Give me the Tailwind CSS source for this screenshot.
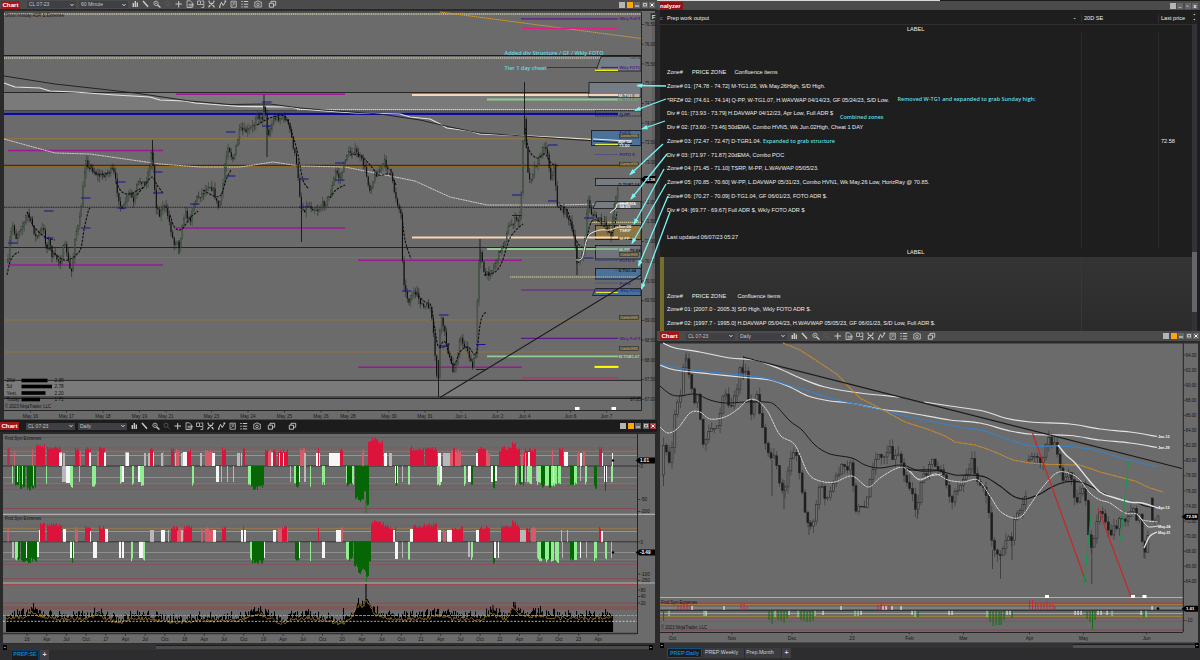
<!DOCTYPE html>
<html lang="en">
<head>
  <meta charset="utf-8">
  <title>PREP</title>
  <script src="https://cdn.jsdelivr.net/npm/@tailwindcss/browser@4"></script>
</head>
<body class="w-[1200px] h-[660px] overflow-hidden bg-[#2d2d30] font-['Liberation_Sans',sans-serif]">

<!-- toolbar shared by the three chart windows -->
<template id="toolbar">
  <div class="w-[19px] h-[8px] shrink-0 bg-[#a3141b] text-white text-[6.2px] leading-[8px] font-bold text-center overflow-hidden">Chart</div>
  <div class="ml-[7px] w-[49px] h-[7px] px-0.5 flex items-center justify-between bg-[#3f3f46] text-[#c4c4c4] text-[5px] leading-none">
    CL 07-23
    <svg class="w-1 h-1" viewBox="0 0 4 4"><path d="M.4 1 2 2.8 3.6 1" fill="none" stroke="#ddd" stroke-width=".9"/></svg>
  </div>
  <div class="ml-[3px] w-[49px] h-[7px] px-0.5 flex items-center justify-between bg-[#3f3f46] text-[#c4c4c4] text-[5px] leading-none">
    <span class="period"></span>
    <svg class="w-1 h-1" viewBox="0 0 4 4"><path d="M.4 1 2 2.8 3.6 1" fill="none" stroke="#ddd" stroke-width=".9"/></svg>
  </div>
  <svg class="ml-[3px] w-[168px] h-[9px] shrink-0" viewBox="131 0 168 9" fill="none" stroke="#c8c8c8" stroke-width=".8">
    <path d="M133.300 3v4M135.300 1v6M137.300 2.500v4.500" stroke-width="1.400"/>
    <path d="M143 1l5 5.800" stroke-width="1.500"/>
    <circle cx="156" cy="3.300" r="2.200"/><path d="M157.500 4.900l3 2.700" stroke-width="1.400"/><path d="M155 3.300h2"/>
    <g stroke="#5c5c5c"><circle cx="167" cy="3.300" r="2.100"/><path d="M168.400 4.800l2.500 2.500"/></g>
    <path d="M175.500 4h6.500M178.700 1v6.500" stroke-width="1"/>
    <path d="M187 .8h3.300l2 2v4.700h-5.300zM188.500 4.300h5.500M188.500 5.900h5"/>
    <path d="M197.500 1h3v3.500h-3zM201.500 1h2.300v6.500h-2.300M201 4.500h2.300"/>
    <path d="M208.300 1.300h1.700M213 1.300h1.700M208.500 7.300l3-4 3 4M209 2.500l5 3.300M214 2.500l-5 3.300" stroke-width="1.100"/>
    <path d="M219.500 6.700l2-4.400 1.700 3.200 2.500-4.200" stroke-width="1"/><path d="M219 7h1.500M224.500 1.300h1.700" stroke-width="1.400"/>
    <path d="M231 1.200h5.300v6h-5.300zM232.300 2.900h3M232.200 5.700l2-2 1 1"/>
    <path d="M241.300 1.500h1.400M243.800 1.500h4.400M241.300 4.200h1.400M243.800 4.200h4.400M241.300 6.900h1.400M243.800 6.900h4.400" stroke-width="1"/>
    <path d="M254.800 2h1.500l.5-.9h2.400l.5.900h1.600v5h-6.500z"/><circle cx="258" cy="4.400" r="1.300"/>
    <path d="M269.300 3.200h4.200v4h-4.200zM271 3v-1.700h4.700v3.900h-1.700" stroke-width=".9"/>
    <g class="extra"><path d="M290.300 3.200h4.200v4h-4.200zM292 3v-1.700h4.700v3.900h-1.700" stroke-width=".9"/></g>
  </svg>
  <div class="ml-auto flex gap-[1.500px]">
    <span class="w-[6px] h-[6px] bg-[#b9b4b4]"></span>
    <span class="w-[6px] h-[6px] bg-[#ffa510]"></span>
    <svg class="w-[6px] h-[6px]" viewBox="0 0 6 6"><path d="M0 0h6v6H0z" fill="#656565"/><path d="M1 4h4" stroke="#eee"/></svg>
    <svg class="w-[6px] h-[6px]" viewBox="0 0 6 6"><path d="M0 0h6v6H0z" fill="#656565"/><path d="M1.500 1.500h3v2.500h-3z" fill="none" stroke="#eee" stroke-width=".7"/></svg>
    <svg class="w-[6px] h-[6px]" viewBox="0 0 6 6"><path class="close" d="M0 0h6v6H0z" fill="#656565"/><path d="M1.500 1.500l3 3M4.500 1.500l-3 3" stroke="#fff"/></svg>
  </div>
</template>

<div class="relative flex w-[1200px] h-[660px]">

  <!-- left column -->
  <div class="w-[657px] flex flex-col">
    <div class="toolbar h-[9px] pl-[1px] pr-[2px] flex items-center bg-[#4b4b4b]" data-period="60 Minute"></div>
    <svg id="hourly" class="block w-[657px] h-[411px]" viewBox="0 9 657 411"></svg>
    <div class="toolbar h-[12px] pr-[1px] flex items-center bg-[#1c1c1c]" data-period="Daily" data-extra="1"></div>
    <svg id="sym" class="block w-[657px] h-[211px]" viewBox="0 432 657 211"></svg>
    <div class="h-[6px] ml-[3px] mr-[4px] mt-px flex items-center justify-between bg-[#333333]">
      <span class="w-[4px] h-[5px] bg-black text-white text-[4px] leading-[5px] text-center">▪</span>
      <span class="ml-[149px] grow h-[4px] bg-[#4b4b4b] border-t border-[#1d1d1d]"></span>
      <span class="w-[4px] h-[5px] bg-black text-white text-[4px] leading-[5px] text-center">▪</span>
    </div>
    <div class="h-[10px] pl-[11px] flex text-[7px] leading-[9px] font-bold">
      <span class="w-[28px] bg-[#1c1c1e] border border-[#123a5c] border-b-0 text-[#0d82d0] text-center text-[5.300px] leading-[7px]">PREP:SE</span>
      <span class="ml-px w-[9px] bg-[#3f3f46] text-[#ddd] text-center">+</span>
    </div>
  </div>

  <!-- right column -->
  <div class="w-[543px] flex flex-col">
    <div class="h-[1px] bg-[#1b1b1b]"><div class="w-[283px] h-px bg-[#d8d8d8]"></div></div>
    <div class="h-[9px] pl-[3px] pr-[2px] flex items-center bg-[#4b4b4b]">
      <span class="w-[23px] h-[8px] bg-[#8e1319] text-white text-[6px] leading-[8px] font-bold">nalyzer</span>
      <span class="ml-auto flex gap-[1.500px]">
        <span class="w-[6px] h-[6px] bg-[#b9b4b4]"></span>
        <span class="w-[6px] h-[6px] bg-[#656565] text-white text-[5px] leading-[5px] text-center">_</span>
        <span class="w-[6px] h-[6px] bg-[#656565] text-white text-[5px] leading-[6px] text-center">▫</span>
        <span class="w-[6px] h-[6px] bg-[#656565] text-white text-[5px] leading-[6px] text-center font-bold">x</span>
      </span>
    </div>
    <div class="h-[321px] ml-[3px] flex bg-[#1e1e1e] text-[#ececec] text-[5.580px]">
      <div class="w-[532px] flex flex-col">
        <div class="h-[15px] pt-[3px] flex items-center border-b border-[#303030]">
          <span class="w-[7px] text-[#888]">c</span>
          <span>Prep work output</span>
          <span class="ml-auto w-[7px] text-[4px]">▪</span>
          <span class="w-[77px] pl-[2px] border-l border-[#303030]">20D SE</span>
          <span class="w-[34px] pl-[2px] border-l border-[#303030] whitespace-nowrap">Last price</span>
        </div>
        <div class="h-[8px] pl-[247px] leading-[8px]">LABEL</div>
        <div class="h-[215px] flex">
          <div class="w-[421px] pl-[7px] pt-[33px] leading-[13.780px] whitespace-pre"><div>Zone#     <span class="pl-[1.500px]">PRICE ZONE</span>     <span class="pl-[.5px]">Confluence items</span></div><div>Zone# 01: [74.78 - 74.72] M-TG1.05, Wk May.26High, S/D High.</div><div>*RFZ# 02: [74.61 - 74.14] Q-PP, W-TG1.07, H.WAVWAP 04/14/23, GF 05/24/23, S/D Low.</div><div>Div # 01: [73.93 - 73.79] H.DAVWAP 04/12/23, Apr Low, Full ADR $</div><div>Div # 02: [73.60 - 73.46] 50dEMA, Combo HVN5, Wk Jun.02High, Cheat 1 DAY</div><div>Zone# 03: [72.47 - 72.47] D-TGR1.04.</div><div>Div # 03: [71.97 - 71.87] 20dEMA, Combo POC</div><div>Zone# 04: [71.45 - 71.10] TSRP, M-PP, L.WAVWAP 05/05/23.</div><div>Zone# 05: [70.85 - 70.60] W-PP, L.DAVWAP 05/31/23, Combo HVN1, Wk May.26 Low, HorizRay @ 70.85.</div><div>Zone# 06: [70.27 - 70.09] D-TG1.04, GF 06/01/23, FOTO ADR $.</div><div>Div # 04: [69.77 - 69.67] Full ADR $, Wkly FOTO ADR $</div><div> </div><div>Last updated 06/07/23 05:27</div></div>
          <div class="w-[77px] border-l border-[#2c2c2c]"></div>
          <div class="w-[34px] pl-[2px] pt-[104px] border-l border-[#2c2c2c] leading-[8px]">72.58</div>
        </div>
        <div class="h-[9px] pl-[247px] leading-[9px]">LABEL</div>
        <div class="grow flex bg-linear-to-b from-[#343434] to-[#2b2b2b]">
          <div class="w-[4px] bg-[#74702c]"></div>
          <div class="w-[417px] pl-[3px] pt-[32.500px] leading-[13.780px] whitespace-pre"><div>Zone#     <span class="pl-[1.500px]">PRICE ZONE</span>      <span class="pl-[2px]">Confluence items</span></div><div>Zone# 01: [2007.0 - 2005.3] S/D High, Wkly FOTO ADR $.</div><div>Zone# 02: [1997.7 - 1995.0] H.DAVWAP 05/04/23, H.WAVWAP 05/05/23, GF 06/01/23, S/D Low, Full ADR $.</div></div>
          <div class="w-[77px] border-l border-[#383838]"></div>
        </div>
      </div>
      <div class="w-[5px] mt-[2px] flex flex-col bg-[#333337]">
        <span class="h-[12px] bg-[#222] text-white text-[4px] leading-[5px] text-center">▪<br>▪</span>
        <span class="mt-[228px] h-[60px] bg-[#66666a]"></span>
      </div>
    </div>
    <div class="toolbar h-[10px] pl-[3px] pr-[1px] flex items-center bg-[#4b4b4b]" data-period="Daily"></div>
    <svg id="daily" class="block w-[543px] h-[302px]" viewBox="657 341 543 302"></svg>
    <div class="h-[5px] ml-[3px] mr-px flex items-center bg-[#333333]">
      <span class="w-[4px] h-[5px] bg-black text-white text-[4px] leading-[5px] text-center">▪</span>
      <span class="ml-auto w-[122px] h-[4px] bg-[#505050] border-t border-[#1d1d1d]"></span>
      <span class="w-[4px] h-[5px] bg-black text-white text-[4px] leading-[5px] text-center">▪</span>
    </div>
    <div class="h-[12px] pl-[10px] flex gap-px text-[5.300px] leading-[9px] text-center text-[#d0d0d0]">
      <span class="w-[35px] h-[10px] bg-[#1c1c1e] border border-[#14507f] text-[#0d82d0] font-bold leading-[8px]">PREP:Daily</span>
      <span class="w-[41px] h-[10px] bg-[#3b3b40] pr-[4px]">PREP:Weekly</span>
      <span class="w-[36px] h-[10px] bg-[#3b3b40] pr-[6px]">Prep.Month</span>
      <span class="w-[9px] h-[10px] bg-[#3f3f46] text-[7px] font-bold">+</span>
    </div>
  </div>

  <!-- annotations drawn over both windows -->
  <svg class="absolute inset-0 w-[1200px] h-[660px] pointer-events-none" viewBox="0 0 1200 660" fill="#62dfe0" font-family="'Open Sans', sans-serif" font-weight="600" font-size="5.400">
    <defs><marker id="tip" markerWidth="7" markerHeight="5" refX="5.500" refY="2.300" orient="auto" markerUnits="userSpaceOnUse"><path d="M0 0 6.500 2.300 0 4.600z" fill="#78f5f5"/></marker></defs>
    <g stroke="#78f5f5" stroke-width="1.300">
      <path d="M666 86L637 85.500" marker-end="url(#tip)"/>
      <path d="M666 99L635 110.500" marker-end="url(#tip)"/>
      <path d="M665 121L642 129" marker-end="url(#tip)"/>
      <path d="M663 144L630 174.500" marker-end="url(#tip)"/>
      <path d="M667 154L631 199" marker-end="url(#tip)"/>
      <path d="M664 169L634 224" marker-end="url(#tip)"/>
      <path d="M666 184L632 243.500" marker-end="url(#tip)"/>
      <path d="M668 196L638.500 266" marker-end="url(#tip)"/>
      <path d="M670 212L641.500 289" marker-end="url(#tip)"/>
    </g>
    <text x="504.500" y="55.300" textLength="99" lengthAdjust="spacingAndGlyphs">Added div Structure / GF / Wkly FOTO</text>
    <text x="504.500" y="70" textLength="42" lengthAdjust="spacingAndGlyphs">Tier 1 day cheat</text>
    <text x="897.500" y="101" textLength="138" lengthAdjust="spacingAndGlyphs">Removed W-TG1 and expanded to grab Sunday high:</text>
    <text x="840" y="118.500" textLength="43.500" lengthAdjust="spacingAndGlyphs">Combined zones</text>
    <text x="763" y="142.600" textLength="72" lengthAdjust="spacingAndGlyphs">Expanded to grab structure</text>
  </svg>
</div>

<script>
// toolbars
document.querySelectorAll('.toolbar').forEach(bar => {
  bar.append(document.getElementById('toolbar').content.cloneNode(true));
  bar.querySelector('.period').textContent = bar.dataset.period;
  if (bar.dataset.extra) bar.querySelector('.close').setAttribute('fill', '#b03038');
  else bar.querySelector('.extra').remove();
});

let seed = 7;
const rnd = () => (seed = (seed * 16807) % 2147483647) / 2147483647;
const nums = s => s.trim().split(/\s+/).map(p => p.split(',').map(Number));
const line = (x1, y1, x2, y2, c, w = 1, dash = '') =>
  `<line x1="${x1}" y1="${y1}" x2="${x2}" y2="${y2}" stroke="${c}" stroke-width="${w}"${dash && ` stroke-dasharray="${dash}"`}/>`;
const poly = (pts, c, w = 1, dash = '') =>
  `<polyline points="${pts}" fill="none" stroke="${c}" stroke-width="${w}" stroke-linejoin="round"${dash && ` stroke-dasharray="${dash}"`}/>`;
const rect = (x, y, w, h, f, extra = '') => `<rect x="${x}" y="${y}" width="${w}" height="${h}" fill="${f}" ${extra}/>`;
const text = (x, y, s, c = '#1a1a1a', size = 4.9, extra = '') =>
  `<text x="${x}" y="${y}" fill="${c}" font-size="${size}" ${extra}>${s}</text>`;
const mid = 'text-anchor="middle"';
const fit = w => `textLength="${w}" lengthAdjust="spacingAndGlyphs"`;
const lerp = (pts, x) => {
  for (let i = 1; i < pts.length; i++) if (x <= pts[i][0]) {
    const [a, b] = [pts[i - 1], pts[i]];
    return a[1] + (b[1] - a[1]) * (x - a[0]) / (b[0] - a[0] || 1);
  }
  return pts[pts.length - 1][1];
};
const smooth = (s, c, w = 1, dash = '') => {
  const p = nums(s);
  let d = `M${p[0]}`;
  for (let i = 0; i < p.length - 1; i++) {
    const a = p[i - 1] || p[i], b = p[i], e = p[i + 1], f = p[i + 2] || e;
    d += `C${b[0] + (e[0] - a[0]) / 6},${b[1] + (e[1] - a[1]) / 6} ${e[0] - (f[0] - b[0]) / 6},${e[1] - (f[1] - b[1]) / 6} ${e}`;
  }
  return `<path d="${d}" fill="none" stroke="${c}" stroke-width="${w}"${dash && ` stroke-dasharray="${dash}"`}/>`;
};

// ---------- 60 minute chart ----------
function hourly() {
  let o = rect(0, 9, 657, 411, '#2a2a2a') + rect(4, 11, 651, 408.500, '#6b6b6b') + rect(652, 20, 3, 399, '#606060');
  o += rect(4, 92.500, 637, 18, '#7a7a7a') + rect(4, 380.500, 637, 17, '#7a7a7a');
  // levels
  [14, 58].forEach(y => o += line(4, y, 641, y, '#c9c5a8', 1.600, '1.200 .7'));
  [[55.500, 1], [92.500, .9], [165.300, .9], [247.500, .9], [380.400, .9], [398.300, 1.600]].forEach(([y, w]) => o += line(4, y, 641, y, '#1d1d1d', w));
  o += line(4, 12, 641, 12, '#333') + line(4, 110.800, 641, 110.800, '#444', 1.500) + line(4, 396.500, 641, 396.500, '#444', .8);
  o += line(297, 109.700, 641, 109.700, '#d8d2a8', 1.200, '1.500 .5') + line(4, 113.800, 618, 113.800, '#0a0a9c', 2.200);
  [138.600, 166.500, 257.500, 320, 352].forEach(y => o += line(4, y, 641, y, y == 166.5 ? '#8d6a24' : '#8c7447', 1.200));
  o += line(4, 207.300, 641, 207.300, '#222', 1.100, '1.200 .6');
  o += line(440, 12, 641, 38.500, '#d99a2b', 1, '1.500 .5');
  [[8, 150.500, 163], [176, 94.300, 345], [176, 228, 345], [8, 265, 163], [358, 260.300, 522], [358, 367.200, 522]].forEach(([a, y, b]) => o += line(a, y, b, y, '#9a1a94', 1.400));
  // long averages
  o += poly('4,83 15,87 40,88 50,91 75,92 115,95 150,97 160,100 185,101 195,103 240,106.500 290,107 300,109 325,111 355,113 400,114 410,117 430,119 440,124 447,128 470,131 480,134 530,136 570,138 600,140 632,141', '#e4e4e4', 1.100);
  o += poly('4,76 55,84 100,89 135,93 190,101 230,104.500 270,104 300,108 330,110.500 380,114 420,120 450,127 480,133 530,136.500 580,140 632,143', '#1b1b1b', .9);
  o += poly('4,139 55,153 90,154 160,164 200,167 240,167 273,162 300,166 345,167 415,181 450,197 487,205 560,205 600,204 641,205', '#ddd4d4', .9, '2 .5');

  // right side targets
  [[18.800, '#5a1a86'], [67.500, '#5a1a86'], [290, '#6a1a90'], [338.400, '#5a1a86']].forEach(([y, c]) => o += line(y == 67.5 ? 547 : 521, y, 618, y, c, 1.200));
  o += line(522, 28.400, 618, 28.400, '#e01d84', 1.400) + line(522, 377.700, 618, 377.700, '#c02a78', 1.400);
  o += line(412, 95, 618, 95, '#f8d4b8', 2) + line(412, 237.500, 618, 237.500, '#f8d4b8', 2);
  [99.500, 249, 356.300].forEach(y => o += line(487, y, 618, y, '#90cc90', 1.800));
  o += line(510, 277, 641, 277, '#d8d090', 1.200, '1.500 .5') + line(592, 222.300, 641, 222.300, '#d8d090', 1, '1.500 .5');
  const box = 'stroke="#161616" stroke-width=".8"';
  o += `<path d="M596 71L601 56.500H641V71z" fill="#747c86" ${box}/>` + rect(589, 82.600, 52, 14.500, '#767c84', box);
  o += line(589, 95, 618, 95, '#f8d4b8', 2);
  o += rect(595.500, 110.500, 45.500, 5.500, 'none', box + ' stroke-dasharray="1 .6"') + rect(591.500, 130.500, 49.500, 15, '#4a7199', box);
  o += rect(595.500, 178.500, 45.500, 7, '#767c84', box) + `<path d="M593 208.500l3-7h45v7z" fill="#767c84" ${box}/>`;
  o += rect(595.500, 225.500, 45.500, 14, '#8d7645', box) + rect(595.500, 245.500, 45.500, 13.500, '#70757c', box);
  o += rect(595.500, 268.500, 45.500, 10.500, '#4a7199', box) + `<path d="M592.500 295.500l3-7h45.500v7z" fill="#4a7199" ${box}/>`;
  o += line(595, 277, 641, 277, '#d8d090', .8, '1.500 .5') + line(595, 237.500, 618, 237.500, '#f8d4b8', 2) + line(595, 249, 618, 249, '#90cc90', 1.500);
  o += line(596, 290, 618, 290, '#6a1a90') + line(595, 70.300, 618, 70.300, '#f0f000', 1.400) + line(595, 144.500, 618, 144.500, '#e4f040', 1.300) + line(596, 292.500, 618, 292.500, '#e0e840', 1) + line(594.500, 366.900, 618.500, 366.900, '#ffff00', 2);
  o += line(601, 67.500, 618, 67.500, '#5a1a86', 1.200);
  [154.500, 260.500, 283].forEach(y => o += line(595, y, 618, y, '#35358c', .7, '1 .5'));
  o += poly('593,139 620,140.500 632,141', '#eee') + poly('593,141 632,143.500', '#1b1b1b', .9);

  // hourly candles
  const path = nums(`8,262 10,238 13,225 16,238 20,228 24,225 27,212 32,224 36,238 40,232 44,228 46,250 49,240 52,255 56,258 61,262 64,245 67,252 69,268 72,272 75,235 79,225 82,200 84,178 86,157 88,165 93,170 98,176 103,175 108,172 113,170 115,178 118,195 122,212 126,200 130,192 134,205 137,185 141,180 145,185 149,170 152,150 154,180 156,205 160,215 163,205 167,212 170,225 174,245 177,238 180,248 182,225 185,212 190,222 193,205 197,198 204,192 209,184 214,192 218,208 222,195 225,165 228,145 232,158 234,160 237,142 240,130 245,132 250,130 254,125 257,110 259,118 262,120 264,104 266,118 268,135 270,130 274,118 280,118 286,118 290,130 294,150 298,175 301,208 304,210 308,205 313,208 318,210 322,205 326,202 330,195 332,188 336,170 340,180 344,165 346,155 354,150 360,158 364,165 370,190 375,175 380,170 384,162 390,170 394,190 398,205 401,215 403,275 406,295 410,302 413,292 418,297 424,308 430,306 433,330 436,370 438,385 440,330 442,318 445,335 449,355 453,372 457,360 460,338 464,345 468,350 472,370 476,352 478,280 480,245 484,275 487,275 492,270 496,262 500,250 504,245 507,230 511,225 515,220 518,222 521,210 524,110 526,140 528,175 531,178 535,165 540,158 545,142 548,158 551,180 554,165 557,205 562,210 566,212 571,225 575,245 577,262 580,258 584,255 586,220 588,200 592,215 597,218 602,222 608,228 611,235 613,215 616,195 618,185`);
  let prev = 262;
  for (let x = 8; x < 618; x += 1.63) {
    const y = lerp(path, x) + (rnd() - .5) * 6, up = y < prev;
    const top = Math.min(prev, y), h = Math.max(Math.abs(prev - y), .8);
    o += line(x, top - rnd() * 6, x, top + h + rnd() * 6, up ? '#263626' : '#161616', .5);
    o += rect(x - .5, top, 1, h, up ? '#566856' : '#0c0c0c', up ? 'stroke="#2a3a2a" stroke-width=".3"' : '');
    prev = y;
  }
  [[524.5, 82, 135], [152.5, 140, 160], [264, 95, 112], [267, 130, 157], [301.5, 210, 242], [438.5, 360, 397], [577, 245, 275], [179, 240, 254], [480, 239, 262]].forEach(([x, a, b]) => o += line(x, a, x, b, '#151515', .9));

  // session vwaps
  ['7,275 10,262 14,255 19,252', '27,212 33,225 40,233 47,238 55,240', '46,245 60,258 68,260 76,255 81,248 84,230 88,212 90,208', '86,165 98,174 110,173', '116,182 122,192 131,194 138,190 145,187', '137,195 145,185 152,177 157,185 163,193', '170,215 175,228 182,229 190,218 198,211', '203,190 214,196 221,195 226,180 231,170', '257,125 270,118 284,116 290,128 297,150 303,180 309,189', '330,198 336,190 345,185', '350,155 360,155 370,165 379,175 390,174 396,185', '402,215 405,240 411,259', '415,293 425,302 431,306 435,330 439,347 450,344', '440,347 445,342 453,365 460,352 468,347 476,354 480,325 483,315 487,312', '484,275 495,272 502,262 509,240 516,230 523,224', '525,128 529,150 537,158 545,154 551,163 558,166', '560,205 568,212 575,238 584,247 590,225 594,220 600,222 612,233 617,212'].forEach(s => o += smooth(s, '#101010', 1.100, '2.500 1.200'));
  o += smooth('576,260 582,258 586,242 590,234 600,230 610,230 618,227', '#eee', 1) + poly('610,213 616,208 617,204 628,203', '#eee');
  // session highs and lows
  nums('44,211 44,238 8,243 81,228 81,198 116,182 117,208 153,172 153,193 190,204 226,132 226,176 262,102 262,126 299,179 299,207 335,163 335,180 402,291 439,315 439,346 476,344.500 476,369.500 512,195 512,215.500 548,145 548,201 584,218 584,258').forEach(([x, y]) => o += line(x, y, x + 9.5, y, '#15158f', 1));
  o += line(440, 397.500, 641, 275, '#1a1a1a', 1.100);

  // labels next to the axis
  const lab = (y, s, c = '#27277f', x = 619.500) => o += text(x, y + 1.6, s, c, 4.2, 'font-weight="bold" ' + (s.length > 7 ? fit(Math.min(21, 640.5 - x)) : ''));
  lab(18.800, 'Wkly Full $', '#5a1a86'); lab(67.500, 'Wkly FOTO', '#5a1a86'); lab(57.500, '75.70', '#444', 630); lab(95, 'M.TG1.05', '#f8e4d8', 618.500); lab(99.500, 'W.TG1.07', '#78b878', 618.500);
  lab(114, 'Q-PP', '#14149c'); lab(132.500, 'Full $', '#2b2b9c'); lab(141, 'Apr 12', '#f0f0f0', 618); lab(145, '73.60', '#eee', 619); lab(154.500, 'FOTO $'); lab(184, 'D.TGR1.04', '#1a1a1a', 618.500);
  lab(203.500, '20dEMA', '#e8e8e8'); lab(206.500, '04:05', '#eee'); lab(226.500, 'Jun 06', '#f2f2f2', 618); lab(230.500, 'TSRP', '#e8e8e8'); lab(238, 'M.PP', '#f8d4b8'); lab(249.500, 'W-PP', '#b0d8b0', 619); lab(250, '70.84', '#1a1a1a', 630);
  lab(260.500, 'FOTO $'); lab(270.500, '– D.TG1.04', '#141414', 615); lab(283.500, 'Full $'); lab(290.500, 'Wkly FOTO', '#1d35a0', 620); lab(338.500, 'Wkly Full $', '#5a1a86'); lab(356.500, 'W.TGB1.07', '#a8d8a8', 618.500);
  [136, 164, 254.300, 317.300, 348.500].forEach(y => o += rect(619.500, y - 1.800, 19, 3.800, '#5d5d55', 'stroke="#222" stroke-width=".5"') + text(620.500, y + 1.300, 'Combo HVN', '#c4a13c', 3.400, fit(17)));

  // axes
  o += line(641.500, 12, 641.500, 410.500, '#252525') + line(4, 410.500, 641.500, 410.500, '#252525');
  for (let i = 0, v = 76.5; i < 20; i++, v -= .5) {
    const y = 24.5 + i * 19.73;
    o += line(641, y, 644, y, '#222', .7) + text(644.800, y + 1.600, v.toFixed(2), '#141414', 4.500, fit(10.2));
  }
  o += '<path d="M640.500 179.500l4-3.500h11v7h-11z" fill="#000"/>' + text(645, 181.100, '72.58', '#fff', 4.400, 'font-weight="bold" ' + fit(10));
  o += text(630, 400.500, '67.05', '#111', 4.500, fit(11)) + rect(650.500, 13, 6, 7, '#333') + text(653.500, 18.600, 'F', '#ddd', 6, mid + ' font-weight="bold"');
  [['May 16', 30.500], ['May 17', 66.500], ['May 18', 103], ['May 19', 139.500], ['May 21', 166], ['May 23', 211.500], ['May 24', 248], ['May 25', 284.500], ['May 26', 321], ['May 28', 348], ['May 30', 389], ['May 31', 425], ['Jun 1', 461], ['Jun 2', 497.500], ['Jun 4', 524.500], ['Jun 6', 570.500], ['Jun 7', 606.500]].forEach(([s, x]) => o += line(x, 410, x, 412.500, '#222', .7) + text(x, 417.800, s, '#161616', 4.700, mid));
  o += rect(575, 407, 4.500, 3, '#fff') + rect(611.500, 407, 4.500, 3, '#fff');
  // range meter
  [['20d', 380.500, 26, '2.39'], ['5d', 386.500, 30.500, '2.78'], ['Yest.', 393, 24, '2.20'], ['Today', 399.500, 18.500, '1.71']].forEach(([s, y, w, v]) => o += text(6.500, y + 1.500, s, '#111', 4.900) + rect(21.500, y - 1.800, w, 3.600, '#000') + text(54.500, y + 1.500, v, '#111', 4.700));
  o += text(5, 17.300, 'Show Intraday ADR &amp; Extremes', '#141414', 4.600, fit(59)) + text(5, 407.500, '© 2023 NinjaTrader, LLC', '#111', 4.800, fit(46));
  o += rect(4, 419, 443, 1, '#484848');
  document.getElementById('hourly').innerHTML = o;
}

// ---------- extremes panels ----------
const fills = { r: '#dc143c', p: '#d85a68', w: '#f6f6f6', s: '#b8b8b8', l: '#90ee90', g: '#066606' };
// each run: kind, from, to, tip
function runs(zero, s) {
  return s.trim().split(/\s+/).map(t => {
    const k = t[0], [a, b, y] = t.slice(1).split(',').map(Number);
    let o = '';
    for (let x = a; x < b; x += 1) {
      const tip = y + (k == 'w' || k == 's' ? 0 : (rnd() - .5) * 4);
      o += rect(x, Math.min(zero, tip), Math.min(1.05, b - x), Math.abs(tip - zero), fills[k]);
    }
    return o;
  }).join('');
}

function extremes() {
  let o = rect(0, 432, 657, 211, '#2a2a2a') + rect(3, 434, 652, 209, '#6b6b6b');
  [[437.500, '#8c4450'], [447.500, '#95505c'], [449, '#8c5560'], [451.300, '#98784a'], [455.500, '#a0a0a0'], [477.500, '#989898'], [483.500, '#877a4a'], [486, '#894e5c'], [489.500, '#894e5c'], [508.500, '#874450'],
   [517.500, '#874450'], [525.500, '#95505c'], [528.500, '#98784a'], [531.500, '#a0a0a0'], [552.500, '#989898'], [559.500, '#a87048'], [561.500, '#894e5c'], [564.500, '#894e5c'], [578.700, '#874450'], [584.500, '#a84444'], [603.200, '#a04040'], [607, '#a83838'], [609, '#a83838']
  ].forEach(([y, c]) => o += line(3, y, 637, y, c, .8));
  [466, 541.800].forEach(y => o += line(3, y, 637, y, '#333', 1));
  [514.300, 583].forEach(y => o += line(3, y, 655, y, '#b0b0b0', 1.200));

  o += runs(466, `r7.500,9.500,448 p14,15,451 p32,33,450 r36,45,446 r47,61,448 w59,62,452.500 s63,65,453 r75,79,449 p80,81,451 r85,91,449 w89,91,452.500 p97,99,451 r99,105,448 w104,106,452.500 s125,126,452 w126,129,452.500 s144,146,453 s148,150,453 r150,153,450 w153,154,452.500 s161,163,453 p163,164,450 r171,174,449 s175,176,453 p176,179,450 s181,183,453 w183,187,452 r187,191,450 s200,202,453 p205,214,451 w212,215,453 r222,226,449 s237,240,453 r243,245,449 s241,242,453 r265,268,449 p268,271,451 w271,274,452.500 r273,276,450 r278,288,451 w279,280,453 w283,284,453 p300,305,450 s304,306,453 w316,320,453 r318,319,446 w329,336,453 w336,342,453 r340,343,450 p362,364,451 r368,383,442 r371,378,439 w384,387,453 s389,392,453 r410,412,447 r412,424,449 r425,437,448 w438,441,453 s443,451,453 p450,461,451 r453,455,450 w476,479,453 r478,486,449 p486,490,452 r499,502,450 r502,512,448 r512,516,443 r516,520,450 p521,523,453 r524,536,450 w528,530,452 s525,526,453 p552,553,452 r559,563,449 w564,568,452 p577,579,452 w580,582,453 p583,585,452 r599,602,448 w602,603,453 w612,613,453`);
  o += runs(466, `l12,13,484 g15,19,486 w17,18,482 g20,25,487 l22,23,484 g27,31,489 g31,36,487 l33,34,484 l46,47,484 s62,66,482 w66,70,483 l70,73,486 s79,80,482 l92,96,485 l120,122,484 w122,124,482 l132,134,485 w138,140,482 l140,144,484 l192,194,484 w216,219,482 s221,222,482 s227,228,482 s233,234,482 l248,251,484 g251,258,488 g258,264,486 s290,291,482 l294,296,485 g296,299,487 w299,300,482 s304,306,482 l310,311,486 l322,325,484 l346,348,484 g347,353,485 l352,354,484 g355,358,498 g358,364,501 g364,366,491 g366,369,505 w395,398,483 g396,397,487 s402,403,482 l408,410,486 l437,441,484 w440,442,482 l464,466,485 w468,471,482 g471,473,486 w491,494,482 g493,495,489 w495,497,481 l515,517,484 g519,524,484 l521,523,483 s525,526,482 l527,532,483 s536,537,481 l537,541,484 g541,545,486 l545,549,484 g549,551,487 l551,557,485 w553,554,482 l558,561,484 g570,574,486 l574,577,484 s580,581,481 l585,587,483 g594,597,487 w604,607,482 g605,606,489 l611,613,483`);
  o += runs(541.8, `p7.500,9,529 w39,40,530 r40,45,524 r47,62,525 w63,66,529 p75,78,528 r85,91,527 w90,91,531 r99,105,527 w105,108,529 s150,154,530 w161,165,530 s168,169,530 r171,178,527 p177,181,529 s181,183,530 r184,192,527 p201,203,530 p205,213,529 w213,216,530 r222,226,528 w241,246,530 r243,244,527 w273,276,530 p278,288,528 r282,287,527 r318,319,526 w336,341,530 p341,343,527 r371,384,523 r374,381,521 r384,388,526 r388,396,528 w393,395,530 w410,413,529 r413,424,526 r424,437,525 w438,441,530 p443,446,530 w447,452,530 r452,463,528 w476,479,530 r479,490,527 r501,512,526 r512,516,522 r516,520,526 s520,526,530 r526,530,530 p531,536,528 s561,562,530 s567,568,530 r599,601,528 w601,603,531`);
  o += runs(541.8, `s12,14,558 l15,18,559 g18,20,558 g21,25,561 g25,27,559 w26,27,558 g27,31,563 g31,37,560 w37,39,557 w70,74,558 g72,73,561 w93,97,558 w119,121,558 w122,124,558 l131,133,560 w139,143,558 l143,145,559 l250,252,559 g252,264,562 w264,265,558 g295,299,560 w299,300,558 l310,311,560 w322,325,558 l346,350,560 g349,353,559 g354,358,566 g358,362,573 g362,366,570 g366,369,576 g369,371,560 w395,398,559 s402,403,558 l408,410,560 s468,470,557 l471,473,559 g493,495,562 w494,496,558 w498,499,558 s537,539,558 l538,542,560 g541,545,560 l545,549,561 g549,551,559 l551,554,560 l555,559,561 s562,563,558 g570,574,560 l574,577,560 w580,581,558 s586,587,558 l594,597,560 l605,607,560 s611,612,558`);
  o += rect(365.500, 500, 1, 13, '#1a7a1a') + rect(366, 576, 1, 6, '#1a7a1a');

  // volatility histogram
  const env = nums('6,616 25,615 28,612 33,610 38,613 50,616 65,618 75,616 85,618 97,613 110,618 118,622 128,618 135,616 150,617 165,619 175,621 190,620 200,618 220,619 240,618 250,615 258,611 264,614 272,617 284,622 292,617 310,616 325,619 342,622 348,618 354,612 357,603 360,605 364,603 366,598 370,604 374,612 382,615 395,618 420,617 437,614 455,617 480,618 492,612 505,618 513,606 517,610 525,614 550,615 580,617 600,616 613,616');
  let gold = '', bars = '';
  for (let x = 6; x < 613; x += 1) {
    const y = lerp(env, x), t = y - Math.pow(rnd(), 2) * 8 + 1;
    bars += rect(x, t, 1.05, 632 - t, '#000');
    gold += `${x},${(y + (rnd() - .5) * 4 + 2).toFixed(1)} `;
  }
  o += bars + [[365.500, 584], [358, 598], [492.500, 605], [514.500, 602], [540, 606], [343, 608], [98.500, 611], [437, 609], [605, 609], [404, 611]].map(([x, y]) => rect(x, y, 1, 632 - y, '#000')).join('');
  o += poly(gold, '#b0872c', .7) + line(3, 615.500, 637, 615.500, '#c89a30', .9, '3 1') + line(3, 621.300, 637, 621.300, '#ddd', .8, '2 1.500');

  o += line(637.500, 434, 637.500, 634, '#252525') + line(3, 633.500, 637, 633.500, '#303030', 1.500);
  [[466, '0'], [499.500, '-50'], [511.500, '-200'], [542, '0'], [574, '-100'], [580.500, '-250'], [590, '80'], [596.500, '40'], [603, '20']].forEach(([y, s]) => o += line(637, y, 640, y, '#222', .7) + text(640.500, y + 1.700, s, '#141414', 4.600));
  [[460.500, '1.01'], [552.500, '-3.49']].forEach(([y, s]) => o += `<path d="M635.500 ${y}l4-3h15.500v6h-15.500z" fill="#000"/>` + text(640, y + 1.600, s, '#fff', 4.600, 'font-weight="bold"') + `<circle cx="613" cy="${y}" r="1.200"/>`);
  ['16', 'Apr', 'Jul', 'Oct', '17', 'Apr', 'Jul', 'Oct', '18', 'Apr', 'Jul', 'Oct', '19', 'Apr', 'Jul', 'Oct', '20', 'Apr', 'Jul', 'Oct', '21', 'Apr', 'Jul', 'Oct', '22', 'Apr', 'Jul', 'Oct', '23', 'Apr'].forEach((s, i) => {
    const x = 27 + i * 19.7;
    o += line(x, 633, x, 636, '#222', .7) + text(x, 641.300, s, '#161616', 4.800, mid);
  });
  o += text(5, 439.800, 'Find Sym Extremes', '#111', 4.700, fit(36)) + text(5, 520, 'Find Sym Extremes', '#111', 4.700, fit(36));
  document.getElementById('sym').innerHTML = o;
}

// ---------- daily chart ----------
function daily() {
  let o = rect(657, 341, 543, 302, '#2a2a2a') + rect(660, 343.500, 538, 299, '#6b6b6b');
  const closes = nums('663.500,445 667,452 669.500,464 672,447 675,413 678,402 681,392 684,362 686,358 689,376 692,391 695,406 698,390 700,418 703,445 709,432 712,428 718,426 722,400 725,391 728,405 731,408 734,395 737,390 740,366 743,372 746,371 748,396 751,416 754,402 757,393 760,415 762,425 765,440 767,450 770,459 773,460 775,453 778,476 781,490 784,491 787,480 789,465 792,454 795,450 798,463 801,485 804,502 806,520 809,526 812,529 815,512 818,493 821,480 823,490 826,502 829,493 832,490 835,473 838,478 841,463 844,466 847,473 850,462 853,485 855,514 858,508 861,507 864,508 867,497 870,480 873,468 876,458 879,453 882,460 885,455 888,449 890,447 893,460 896,456 899,453 903,472 906,478 909,488 912,492 915,511 918,504 921,482 924,474 927,475 930,462 933,459 936,470 939,471 942,472 945,480 948,490 951,506 954,493 958,490 963,480 968,473 972,457 975,474 978,484 982,486 985,490 988,502 990,525 993,553 996,548 999,560 1002,552 1005,541 1008,535 1012,542 1015,515 1020,512 1023,505 1027,493');
  const second = nums('1029,458 1033,455 1038,458 1041,463 1045,450 1048,435 1051,444 1054,442 1057,453 1060,467 1063,480 1067,475 1069,472 1072,482 1075,503 1078,500 1082,486 1085,492 1087,524 1090,547 1093,545 1096,526 1099,512 1102,510 1105,522 1108,530 1111,535 1114,525 1117,530 1120,515 1124,523 1127,520 1130,513 1133,504 1136,522 1139,512 1142,540 1145,551 1148,533 1150,520');
  const candle = (x, a, b, hi, lo) => line(x, hi, x, lo, '#333', .6) + rect(x - 1, Math.min(a, b), 2, Math.max(Math.abs(a - b), .8), b > a ? '#1e1e1e' : '#707070', 'stroke="#222" stroke-width=".5"');
  [[closes, 475, 1028], [second, 461, 1149]].forEach(([p, start, end]) => {
    let prev = start;
    for (let x = p[0][0]; x < end; x += 2.83) {
      const y = lerp(p, x) + (rnd() - .5) * 3;
      o += candle(x, prev, y, Math.min(prev, y) - rnd() * 8, Math.max(prev, y) + rnd() * 8);
      prev = y;
    }
  });
  o += candle(1152.300, 498, 520, 498, 521) + candle(1155, 522, 521, 518, 525) + candle(1158, 522, 516, 515, 524);
  [[663.500, 475, 486], [686, 355, 362], [772, 460, 496], [743.500, 356, 380], [784, 480, 509], [809, 520, 535], [1000.500, 555, 579], [992.500, 550, 569], [1012, 540, 560], [1091.800, 545, 584], [1144, 545, 558], [917.500, 510, 519]].forEach(([x, a, b]) => o += line(x, a, x, b, '#2e2e2e', .7));

  // averages
  const wt = '#e2e2e2';
  o += smooth('663,343 675,348 700,352 730,358 755,360 780,369 800,378 825,387 860,393 900,397', wt, 1.200);
  o += smooth('924,402 950,406 983,411 1005,418 1030,422 1070,424 1100,429 1130,432 1157,436.500', wt, 1.200);
  o += smooth('660,365 675,370 710,374 750,378 770,380 790,387 808,396 830,401 850,403 880,409 910,413 950,420 980,423 1010,431 1035,434.500 1070,435.500 1100,440 1130,443 1157,447.500', wt, 1.200);
  o += smooth('660,364 685,369 720,373 760,377 785,384 808,391 830,398 860,405 885,411 910,417 960,427 985,431 1010,440 1030,446 1060,446 1090,449 1125,459 1158,467', '#3a80c8', 1.200);
  o += poly('783,343 800,350 820,363 838,375 848,386 860,398 885,411 905,422 930,430 945,436 955,442 975,445 990,450 1013,460 1030,463 1050,464.500 1080,465 1100,472 1135,481 1150,488 1163,492', '#cc8d2c', 1.100, '2 .5');
  o += smooth('660,386 670,394 680,396 695,394 710,400 725,403 745,402 765,402 775,405 790,421 802,430 815,445 830,454 852,458 865,465 880,468 902,465 920,471 945,470', '#181818', 1);
  o += smooth('900,466 912,470 935,470 955,475 970,475 985,477 1000,486 1013,496 1025,499 1040,494 1050,488 1065,482 1080,482 1092,487 1103,493 1120,500 1135,502 1145,506 1158,507.500', '#181818', 1.200);
  o += smooth('660,427 668,433 678,428 690,413 700,412 710,419 725,417 738,409 748,400 758,401 768,412 780,435 795,445 808,473 820,481 835,482 852,476 868,487 880,478 895,469 905,468 918,479 930,476 942,474', '#e0d4d4', 1, '2.500 .5');
  o += smooth('910,471 920,480 935,474 948,480 963,482 978,480 990,496 1000,511 1013,518 1022,516 1030,505 1042,488 1055,474 1065,472 1078,478 1090,493 1100,500 1110,503 1125,513 1137,514 1143,520 1158,522', '#e0d4d4', 1, '2.500 .5');
  o += smooth('1058,445 1066,455 1075,463 1088,479 1100,492 1112,497 1130,502 1142,503 1158,508', wt, 1.400);
  o += smooth('1137,514 1142,520 1147,526 1151,527 1158,526', wt) + smooth('1144,548 1150,536 1157,532', wt, 1.300);
  o += line(743, 357, 1182, 468.500, '#1a1a1a', 1.100);
  o += line(1032.500, 433, 1086, 582, '#cc2626', 1.200) + line(1098, 508, 1131, 597, '#cc2626', 1.200);
  o += line(1128.500, 462, 1120.500, 541, '#15994c', 1.100) + line(1092, 506, 1084, 584, '#15994c', 1.100);
  [['Jan.13', 436.500], ['Jan.29', 447.500], ['Apr.12', 507.500], ['May.24', 526.300], ['May.31', 532]].forEach(([s, y]) => o += text(1158, y + 1.500, s, '#f4f4f4', 4.200, 'font-weight="bold" ' + fit(s[0] == 'M' ? 12.5 : 11.5)));

  // extremes strip
  o += line(660, 597.500, 1183, 597.500, '#b0b0b0', 1);
  [[603, '#a83848'], [604.500, '#a87840'], [608, '#999'], [613.500, '#a8a8a8'], [616.500, '#8c8840'], [618, '#a04858'], [621.500, '#a04858'], [630, '#8c3c50']].forEach(([y, c]) => o += line(660, y, 1183, y, c, .9));
  o += line(660, 610.300, 1183, 610.300, '#333', 1.200);
  const sticks = (list, c, y) => list.forEach(([x, t]) => o += rect(x - .5, Math.min(y, t), 1.1, Math.abs(t - y), c));
  sticks(nums('678,605 681,605 684,604 687,604 690,605 741,604 744,604 747,606 878,605 881,604 884,605 889,605 1029.500,600 1032.500,600 1035.500,602 1038,603 1041,603 1044,603 1047,601 1050,603 1053,604 1055,606'), '#c8283f', 610);
  sticks(nums('692,606 724,606 841,606 883,606 886,606 892,606 901,606 1152,606'), '#eee', 610);
  sticks(nums('706,616 789,615 823,615 861,615 912,615 949,615 952,615 1007,615 1010,615 1075,615 1078,615 1081,615 1098,615 1101,615 1107,615 1141,615'), '#e6e6e6', 610.800);
  sticks(nums('669,616 704,616 775,617 798,617 815,616 855,616 858,616 915,617 987,617 1112,616 1146,617'), '#90e090', 610.800);
  sticks(nums('663.500,621 769,620 772,624 778,620 781,621 784,623 787,618 801,620 804,621 807,622 810,622 813,621 918,617 990,622 993,626 996,625 999,625 1001,625 1004,620 1012,618 1087,619 1090,622 1092.500,629 1095,620 1144,617'), '#157015', 610.800);
  [1045, 1131, 1142.500].forEach(x => o += rect(x, 595, 4, 3, '#fff'));

  // axes
  o += line(1183.300, 343, 1183.300, 632, '#252525') + line(660, 632.500, 1183, 632.500, '#252525');
  for (let i = 0; i < 16; i++) {
    const y = 355 + i * 15.1;
    o += line(1183, y, 1185.500, y, '#222', .7) + text(1185.800, y + 1.600, (94 - 2 * i).toFixed(2), '#141414', 4.500, fit(10.5));
  }
  o += line(1183, 620.500, 1185.500, 620.500, '#222', .7) + text(1186, 622.200, '-10', '#141414', 4.500);
  [[516.800, '72.58'], [608.700, '1.01']].forEach(([y, s]) => o += `<path d="M1181.500 ${y}l4-3h12.500v6h-12.500z" fill="#000"/>` + text(1186, y + 1.600, s, '#fff', 4.400, 'font-weight="bold"'));
  o += '<circle cx="1158" cy="608.600" r="1.300"/>';
  [['Oct', 672.500], ['Nov', 732], ['Dec', 792], ['23', 852], ['Feb', 909.500], ['Mar', 963.500], ['Apr', 1029.500], ['May', 1083.500], ['Jun', 1146.500]].forEach(([s, x]) => o += line(x, 632, x, 634.500, '#222', .7) + text(x, 640, s, '#161616', 4.800, mid));
  o += text(661, 603.500, 'Find Sym Extremes', '#111', 4.700, fit(36)) + text(661, 629, '© 2023 NinjaTrader, LLC', '#111', 4.800, fit(46));
  document.getElementById('daily').innerHTML = o;
}

hourly();
extremes();
daily();
</script>
</body>
</html>
